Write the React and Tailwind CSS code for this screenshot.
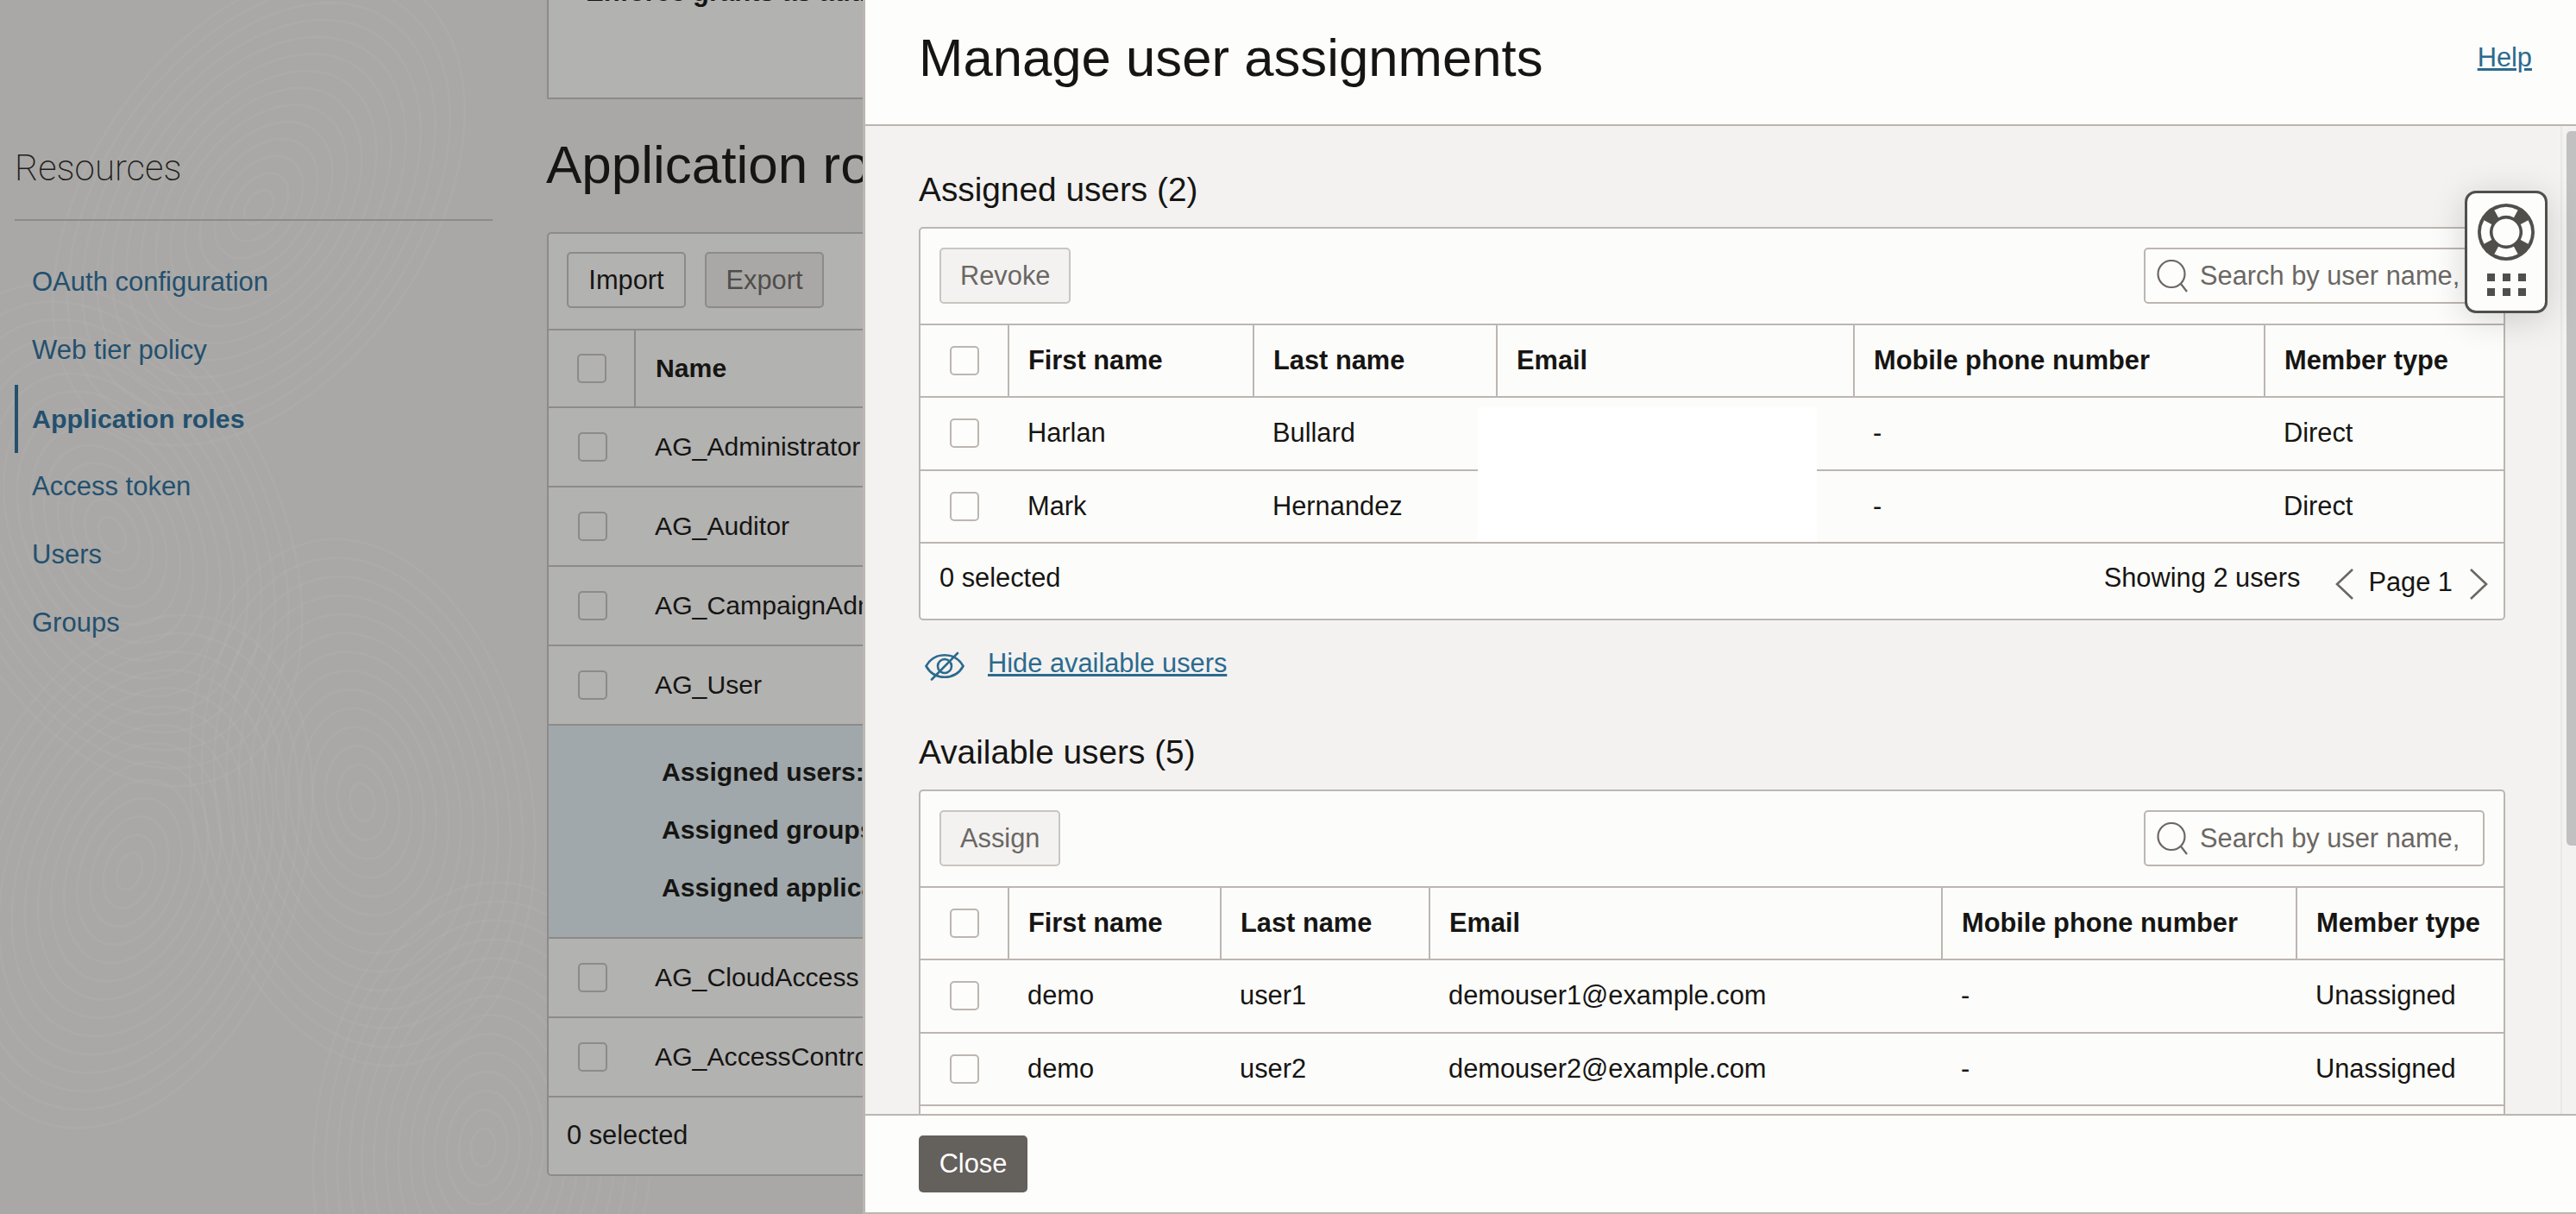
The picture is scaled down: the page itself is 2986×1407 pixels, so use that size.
import React from "react";

const navItems = [
  { label: "OAuth configuration" },
  { label: "Web tier policy" },
  { label: "Application roles", active: true },
  { label: "Access token" },
  { label: "Users" },
  { label: "Groups" },
];

const swirls = [
  { cx: 150, cy: 1010, rot: 20 },
  { cx: 420, cy: 930, rot: -10 },
  { cx: 300, cy: 240, rot: 35 },
  { cx: 130, cy: 620, rot: -25 },
  { cx: 560, cy: 1330, rot: 5 },
];

const assignedHeaders = ["First name", "Last name", "Email", "Mobile phone number", "Member type"];

const assignedRows = [
  ["Harlan", "Bullard", "", "-", "Direct"],
  ["Mark", "Hernandez", "", "-", "Direct"],
];

const availableRows = [
  ["demo", "user1", "demouser1@example.com", "-", "Unassigned"],
  ["demo", "user2", "demouser2@example.com", "-", "Unassigned"],
];

const Checkbox = ({ dim }) => (
  <div
    className={`h-[34px] w-[34px] rounded-[5px] border-2 ${
      dim ? "border-[#8d8b88] bg-[#b2b2b1]" : "border-[#bcb6b1] bg-[#fdfdfb]"
    }`}
  ></div>
);

const SearchIcon = () => (
  <svg width="38" height="38" viewBox="0 0 38 38" fill="none" stroke="#6b6763" strokeWidth="2.2" className="shrink-0">
    <circle cx="18" cy="16.5" r="15.5" />
    <path d="M29 28 L36 37" />
  </svg>
);

const EyeOffIcon = () => (
  <svg width="46" height="34" viewBox="0 0 46 34" fill="none" stroke="#2c6a8e" strokeWidth="2.6" className="shrink-0">
    <path d="M1.5 17 C11 0 35 0 44.5 17 C35 34 11 34 1.5 17 Z" />
    <circle cx="23" cy="17" r="8" />
    <path d="M8 32.5 L38 2" strokeLinecap="round" />
  </svg>
);

const Chevron = ({ right, className }) => (
  <svg width="22" height="36" viewBox="0 0 22 36" fill="none" stroke="#6b6763" strokeWidth="2.6" className={`shrink-0 ${className}`}>
    <path d={right ? "M2 1 L20 18 L2 35" : "M20 1 L2 18 L20 35"} />
  </svg>
);

const LifeRing = () => (
  <svg width="68" height="68" viewBox="-34 -34 68 68">
    <circle r="33" fill="#504f4b" />
    {[0, 90, 180, 270].map((deg) => (
      <path
        key={deg}
        transform={`rotate(${deg})`}
        d="M-11.3 -21.2 A24 24 0 0 1 11.3 -21.2"
        fill="none"
        stroke="#fdfdfb"
        strokeWidth="10"
      />
    ))}
    <circle r="17" fill="#fdfdfb" stroke="#504f4b" strokeWidth="3" />
  </svg>
);

const HelpWidget = () => (
  <div className="absolute top-[221px] right-[33px] flex h-[142px] w-[96px] flex-col items-center rounded-[13px] border-[3.5px] border-[#504f4b] bg-[#fdfdfb] pt-[11px] shadow-[0_6px_40px_rgba(0,0,0,0.16)]">
    <LifeRing />
    <div className="mt-[14px] grid grid-cols-3 gap-x-[9px] gap-y-[8px]">
      {[0, 1, 2, 3, 4, 5].map((i) => (
        <div key={i} className="h-[9px] w-[9px] bg-[#504f4b]"></div>
      ))}
    </div>
  </div>
);

const UserTable = ({ action, gridClass, headers, rows, showRedaction, trailing, footer }) => (
  <div className="rounded-[5px] border-2 border-[#bcb6b1] bg-[#fcfcfa]">
    <div className="flex h-[112px] items-start justify-between border-b-2 border-[#bcb6b1] pt-[22px] pr-[22px] pl-[22px]">
      <button className="h-[65px] rounded-[5px] border-2 border-[#c9c5c0] bg-[#f3f2f1] px-[22px] pt-[2px] text-[30.8px] text-[#6b6763]">
        {action}
      </button>
      <div className="flex h-[65px] w-[395px] items-center gap-[13px] overflow-hidden rounded-[5px] border-2 border-[#bcb6b1] bg-[#fdfdfb] pl-[12px] text-[30.8px] whitespace-nowrap text-[#6b6763]">
        <SearchIcon />
        <span className="pt-[2px]">Search by user name,</span>
      </div>
    </div>
    <div className={`grid h-[84px] border-b-2 border-[#bcb6b1] ${gridClass}`}>
      <div className="flex items-center justify-center">
        <Checkbox />
      </div>
      {headers.map((h) => (
        <div key={h} className="flex items-center border-l-2 border-[#bcb6b1] pl-[22px] text-[30.8px] font-bold whitespace-nowrap text-[#161513]">
          {h}
        </div>
      ))}
    </div>
    <div className="relative">
      {rows.map((row, i) => (
        <div key={i} className={`grid h-[84.5px] border-b-2 border-[#bcb6b1] ${gridClass}`}>
          <div className="flex items-center justify-center">
            <Checkbox />
          </div>
          {row.map((cell, j) => (
            <div key={j} className="flex items-center pl-[23px] text-[30.8px] whitespace-nowrap text-[#161513]">
              {cell}
            </div>
          ))}
        </div>
      ))}
      {showRedaction && <div className="absolute top-[11px] left-[646px] h-[156px] w-[393px] bg-white"></div>}
      {trailing}
    </div>
    {footer}
  </div>
);

const BackRow = ({ name }) => (
  <div className="flex h-[92px] items-center border-b-2 border-[#8d8b88] text-[30.2px] whitespace-nowrap text-[#161513]">
    <div className="flex w-[101px] shrink-0 justify-center">
      <Checkbox dim />
    </div>
    <span className="ml-[22px]">{name}</span>
  </div>
);

const BackgroundPage = () => (
  <div className="relative flex w-[1000px] shrink-0 overflow-hidden bg-[#a9a8a6] text-[#161513]">
    <svg className="absolute inset-0" width="1000" height="1407" fill="none" stroke="#ffffff" strokeOpacity="0.035" strokeWidth="3">
      {swirls.map((s, i) => (
        <g key={i} transform={`rotate(${s.rot} ${s.cx} ${s.cy})`}>
          {[1, 2, 3, 4, 5, 6, 7, 8, 9, 10, 11, 12, 13, 14].map((n) => (
            <ellipse key={n} cx={s.cx} cy={s.cy} rx={n * 14} ry={n * 22} />
          ))}
        </g>
      ))}
    </svg>

    <aside className="relative w-[634px] shrink-0 pt-[167px] pl-[17px]">
      <h2 className="w-[554px] border-b-2 border-[#8d8b88] pb-[31px] text-[42px] leading-[56px] font-extralight font-['Roboto',sans-serif] text-[#1f1e1c]">
        Resources
      </h2>
      <nav className="mt-[32px] flex flex-col">
        {navItems.map((item) => (
          <a
            key={item.label}
            className={`flex h-[79px] items-center border-l-4 pl-[16px] text-[#24506e] ${
              item.active ? "border-[#24506e] text-[30.4px] font-bold" : "border-transparent text-[31px]"
            }`}
          >
            {item.label}
          </a>
        ))}
      </nav>
    </aside>

    <main className="relative w-[366px] shrink-0 overflow-visible">
      <div className="h-[115px] w-[900px] overflow-hidden border-b-2 border-l-2 border-[#8d8b88] bg-[#b2b2b1] pl-[43px]">
        <p className="mt-[-27px] text-[31px] leading-[36px] font-bold whitespace-nowrap">Enforce grants as authorization</p>
      </div>
      <h1 className="mt-[41px] ml-[-1px] text-[62px] leading-[70px] whitespace-nowrap">Application roles</h1>
      <div className="mt-[43px] w-[900px] rounded-[5px] border-2 border-[#8d8b88] bg-[#b2b2b1]">
        <div className="flex h-[112px] items-start gap-[22px] border-b-2 border-[#8d8b88] pt-[21px] pl-[21px]">
          <button className="h-[65px] w-[138px] rounded-[5px] border-2 border-[#8d8b88] pt-[2px] text-[30.8px]">Import</button>
          <button className="h-[65px] w-[138px] rounded-[5px] border-2 border-[#8d8b88] bg-[#a9a8a6] pt-[2px] text-[30.8px] text-[#4f4d4a]">Export</button>
        </div>
        <div className="flex h-[90px] items-center border-b-2 border-[#8d8b88] text-[30.2px] font-bold">
          <div className="flex h-full w-[101px] shrink-0 items-center justify-center border-r-2 border-[#8d8b88]">
            <Checkbox dim />
          </div>
          <span className="ml-[23px]">Name</span>
        </div>
        <BackRow name="AG_Administrator" />
        <BackRow name="AG_Auditor" />
        <BackRow name="AG_CampaignAdmin" />
        <BackRow name="AG_User" />
        <div className="flex h-[247px] flex-col gap-[31px] border-b-2 border-[#8d8b88] bg-[#a0a8ab] pt-[36px] pl-[131px] text-[30.2px] leading-[36px] font-bold whitespace-nowrap">
          <span>Assigned users:</span>
          <span>Assigned groups:</span>
          <span>Assigned applications:</span>
        </div>
        <BackRow name="AG_CloudAccess" />
        <BackRow name="AG_AccessControl" />
        <div className="flex h-[89px] items-center pl-[21px] text-[30.8px]">0 selected</div>
      </div>
    </main>
  </div>
);

const App = () => {
  return (
    <div className="relative flex h-[1407px] w-[2986px] overflow-hidden font-['Liberation_Sans',Arial,sans-serif]">
      <BackgroundPage />

      <div className="flex h-[1407px] w-[1986px] shrink-0 flex-col border-b-2 border-l-[3px] border-[#bcb6b1] bg-[#fdfdfb]">
        <header className="flex h-[146px] shrink-0 items-start justify-between border-b-2 border-[#bcb6b1] pt-[32px] pr-[51px] pl-[62px]">
          <h1 className="text-[61.7px] leading-[70px] text-[#161513]">Manage user assignments</h1>
          <a className="mt-[17px] text-[30.8px] leading-[36px] text-[#2c6a8e] underline">Help</a>
        </header>

        <div className="flex min-h-0 flex-1">
          <div className="min-w-0 flex-1 overflow-hidden bg-[#f3f2f1] pr-[64px] pl-[62px]">
            <h2 className="pt-[52px] pb-[21px] text-[38.8px] leading-[44px] text-[#161513]">Assigned users (2)</h2>
            <UserTable
              action="Revoke"
              gridClass="grid-cols-[101px_284px_282px_414px_476px_1fr]"
              headers={assignedHeaders}
              rows={assignedRows}
              showRedaction
              footer={
                <div className="flex h-[87px] items-start justify-between pt-[22px] pr-[18px] pl-[22px] text-[30.8px] leading-[36px] text-[#161513]">
                  <span>0 selected</span>
                  <div className="flex items-start">
                    <span>Showing 2 users</span>
                    <Chevron className="mt-[7px] ml-[41px]" />
                    <span className="mt-[5px] mr-[19px] ml-[16px]">Page 1</span>
                    <Chevron right className="mt-[7px]" />
                  </div>
                </div>
              }
            />
            <div className="flex h-[131px] items-start gap-[27px] pt-[36px] pl-[7px]">
              <EyeOffIcon />
              <a className="mt-[-4px] text-[30.8px] leading-[36px] text-[#2c6a8e] underline">Hide available users</a>
            </div>
            <h2 className="pb-[21px] text-[38.8px] leading-[44px] text-[#161513]">Available users (5)</h2>
            <UserTable
              action="Assign"
              gridClass="grid-cols-[101px_246px_242px_594px_411px_1fr]"
              headers={assignedHeaders}
              rows={availableRows}
              trailing={<div className="h-[85px]"></div>}
            />
          </div>
          <div className="w-[18px] shrink-0 border-l-2 border-[#e8e8e6] bg-[#f3f2f1] pt-[6px] pl-[5px]">
            <div className="h-[828px] w-[11px] rounded-l-[5px] bg-[#c1c1c1]"></div>
          </div>
        </div>

        <footer className="flex h-[114px] shrink-0 items-start border-t-2 border-[#bcb6b1] pt-[23px] pl-[62px]">
          <button className="h-[66px] w-[126px] rounded-[5px] bg-[#64605c] text-[30.8px] text-white">Close</button>
        </footer>
      </div>

      <HelpWidget />
    </div>
  );
};

export default App;
